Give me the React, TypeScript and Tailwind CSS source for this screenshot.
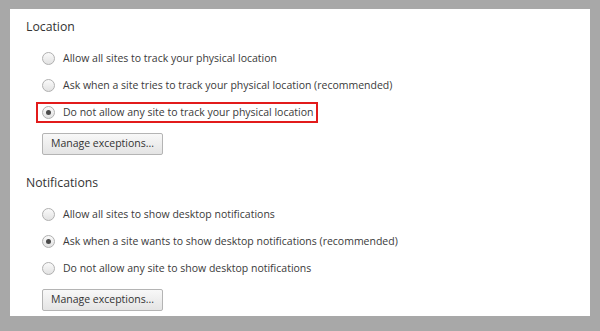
import type { ReactNode } from "react";

const LOCATION = [
  { label: "Allow all sites to track your physical location", checked: false },
  { label: "Ask when a site tries to track your physical location (recommended)", checked: false },
  { label: "Do not allow any site to track your physical location", checked: true, marked: true },
];

const NOTIFICATIONS = [
  { label: "Allow all sites to show desktop notifications", checked: false },
  { label: "Ask when a site wants to show desktop notifications (recommended)", checked: true },
  { label: "Do not allow any site to show desktop notifications", checked: false },
];

function Radio({ checked }: { checked: boolean }) {
  return (
    <span className="flex h-[13px] w-[13px] shrink-0 items-center justify-center rounded-full border border-[#b0b0b0] bg-gradient-to-b from-[#fafafa] to-[#e2e2e2]">
      {checked && <span className="h-[5px] w-[5px] rounded-full bg-[#4a4a4a]" />}
    </span>
  );
}

function Option({ label, checked, marked }: { label: string; checked: boolean; marked?: boolean }) {
  const inner = (
    <>
      <Radio checked={checked} />
      <span className="ml-[8px]">{label}</span>
    </>
  );
  if (marked) {
    return (
      <div className="flex h-[27px] items-center pl-[10px]">
        <div className="flex h-[21px] items-center border-2 border-[#e21b1b] pl-[4px] pr-[3px]">{inner}</div>
      </div>
    );
  }
  return <div className="flex h-[27px] items-center pl-[16px]">{inner}</div>;
}

function Section({ title, children }: { title: string; children: ReactNode }) {
  return (
    <section>
      <h2 className="h-[18px] text-[12.25px] leading-[18px] text-[#333]">{title}</h2>
      <div className="mt-[9px]">{children}</div>
    </section>
  );
}

function ManageButton() {
  return (
    <button className="ml-[16px] mt-[7px] flex h-[22px] w-[121px] items-center justify-center rounded-[2px] border border-[#b4b4b4] bg-gradient-to-b from-[#f8f8f8] to-[#e4e4e4] text-[10.5px] text-[#333]">
      Manage exceptions...
    </button>
  );
}

export default function App() {
  return (
    <div className="h-[331px] w-[600px] bg-[#a8a8a8] pl-[10px] pt-[9px] font-['Open_Sans',sans-serif]">
      <div className="h-[307px] w-[580px] bg-white pl-[16px] pt-[9px] text-[10.5px] text-[#3a3a3a]">
        <Section title="Location">
          {LOCATION.map((o) => (
            <Option key={o.label} {...o} />
          ))}
          <ManageButton />
        </Section>
        <div className="mt-[19px]">
          <Section title="Notifications">
            {NOTIFICATIONS.map((o) => (
              <Option key={o.label} {...o} />
            ))}
            <ManageButton />
          </Section>
        </div>
      </div>
    </div>
  );
}
